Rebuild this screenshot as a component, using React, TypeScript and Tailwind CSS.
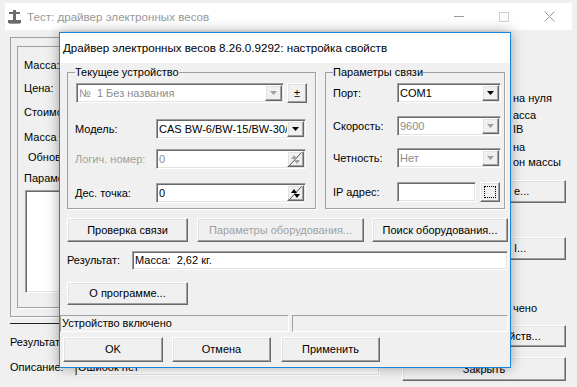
import React from "react";

const sunken =
  "border border-t-[#a0a0a0] border-l-[#a0a0a0] border-b-white border-r-white shadow-[inset_1px_1px_0_#696969,inset_-1px_-1px_0_#e3e3e3] bg-white p-px";
const raised =
  "border border-t-white border-l-white border-b-[#696969] border-r-[#696969] shadow-[inset_-1px_-1px_0_#a0a0a0,inset_1px_1px_0_#e3e3e3] bg-[#f0f0f0]";
const thinSunken =
  "border border-t-[#a0a0a0] border-l-[#a0a0a0] border-b-white border-r-white";

function Btn({
  children,
  className = "",
  disabled = false,
}: {
  children?: React.ReactNode;
  className?: string;
  disabled?: boolean;
}) {
  return (
    <div
      className={`${raised} flex shrink-0 items-center justify-center whitespace-nowrap ${
        disabled ? "text-[#a0a0a0]" : "text-black"
      } ${className}`}
    >
      {children}
    </div>
  );
}

function Arrow({ disabled = false }: { disabled?: boolean }) {
  return (
    <div className={`${raised} flex h-full w-[17px] shrink-0 items-center justify-center`}>
      <svg width="7" height="4" viewBox="0 0 7 4">
        <path d="M0 0h7L3.5 4z" fill={disabled ? "#a0a0a0" : "#000"} />
      </svg>
    </div>
  );
}

function Combo({
  value,
  disabled = false,
  className = "",
}: {
  value: string;
  disabled?: boolean;
  className?: string;
}) {
  return (
    <div className={`${sunken} flex shrink-0 ${className}`}>
      <div
        className={`flex flex-1 items-center overflow-hidden whitespace-pre pl-[1px] ${
          disabled ? "text-[#8c8c8c]" : "text-black"
        }`}
      >
        {value}
      </div>
      <Arrow disabled={disabled} />
    </div>
  );
}

function SpinIcon({ disabled = false }: { disabled?: boolean }) {
  const c = disabled ? "#a0a0a0" : "#000";
  return (
    <div className={`${raised} flex h-full w-[17px] shrink-0 items-center justify-center`}>
      <svg width="13" height="14" viewBox="0 0 13 14">
        <path d="M0.5 13.5L12.5 0.5" stroke="#505050" strokeWidth="1" />
        <path d="M2 7h6L5 3z" fill={c} />
        <path d="M5 8h6L8 12z" fill={c} />
      </svg>
    </div>
  );
}

function Spin({
  value,
  disabled = false,
  className = "",
}: {
  value: string;
  disabled?: boolean;
  className?: string;
}) {
  return (
    <div className={`${sunken} flex shrink-0 ${className}`}>
      <div
        className={`flex flex-1 items-center pl-[1px] ${
          disabled ? "text-[#8c8c8c]" : "text-black"
        }`}
      >
        {value}
      </div>
      <SpinIcon disabled={disabled} />
    </div>
  );
}

const groupBox = "border border-[#a0a0a0] shadow-[1px_1px_0_white]";

function Dialog() {
  return (
    <div className="absolute left-[59px] top-[32px] flex h-[336px] w-[452px] flex-col border border-[#1883d7] bg-[#f0f0f0] shadow-[0_0_12px_rgba(0,0,0,0.35)]">
      <div className="flex h-[30px] items-center bg-white pb-[2px] pl-[3px] text-[11.6px] text-black">
        Драйвер электронных весов 8.26.0.9292: настройка свойств
      </div>

      <div className="mt-[3px] flex pl-[7px]">
        <fieldset className={`h-[143px] w-[249px] ${groupBox}`}>
          <legend className="ml-[7px] leading-[13px]">Текущее устройство</legend>
          <div className="mt-[4px] flex gap-[3px] pl-[8px]">
            <Combo value={"№  1 Без названия"} disabled className="h-[20px] w-[208px]" />
            <Btn className="h-[20px] w-[20px]">±</Btn>
          </div>
          <div className="mt-[16px] flex items-center pl-[7px]">
            <div className="w-[81px]">Модель:</div>
            <Combo value="CAS BW-6/BW-15/BW-30/BW-60" className="h-[20px] w-[150px]" />
          </div>
          <div className="mt-[10px] flex items-center pl-[7px]">
            <div className="w-[81px] text-[#a0a0a0]">Логич. номер:</div>
            <Spin value="0" disabled className="h-[20px] w-[150px]" />
          </div>
          <div className="mt-[14px] flex items-center pl-[7px]">
            <div className="w-[81px]">Дес. точка:</div>
            <Spin value="0" className="h-[20px] w-[150px]" />
          </div>
        </fieldset>

        <fieldset className={`ml-[9px] h-[143px] w-[180px] ${groupBox}`}>
          <legend className="ml-[7px] leading-[13px]">Параметры связи</legend>
          <div className="mt-[4px] flex items-center pl-[7px]">
            <div className="w-[64px]">Порт:</div>
            <Combo value="COM1" className="h-[20px] w-[104px]" />
          </div>
          <div className="mt-[13px] flex items-center pl-[7px]">
            <div className="w-[64px]">Скорость:</div>
            <Combo value="9600" disabled className="h-[20px] w-[104px]" />
          </div>
          <div className="mt-[12px] flex items-center pl-[7px]">
            <div className="w-[64px]">Четность:</div>
            <Combo value="Нет" disabled className="h-[20px] w-[104px]" />
          </div>
          <div className="mt-[14px] flex items-center pl-[7px]">
            <div className="w-[64px]">IP адрес:</div>
            <div className={`${sunken} h-[20px] w-[79px]`} />
            <Btn className="ml-[4px] h-[20px] w-[20px]">
              <div className="h-[12px] w-[12px] border border-dotted border-black" />
            </Btn>
          </div>
        </fieldset>
      </div>

      <div className="mt-[9px] flex pl-[7px]">
        <Btn className="h-[24px] w-[121px]">Проверка связи</Btn>
        <Btn disabled className="ml-[9px] h-[24px] w-[167px]">
          Параметры оборудования...
        </Btn>
        <Btn className="ml-[8px] h-[24px] w-[136px]">Поиск оборудования...</Btn>
      </div>

      <div className="mt-[9px] flex items-center pl-[7px]">
        <div className="w-[65px]">Результат:</div>
        <div className={`${sunken} flex h-[19px] w-[376px] items-center whitespace-pre pl-[2px]`}>
          {"Масса:  2,62 кг."}
        </div>
      </div>

      <div className="mt-[12px] flex pl-[7px]">
        <Btn className="h-[23px] w-[121px]">О программе...</Btn>
      </div>

      <div className="mt-[10px] flex gap-[3px]">
        <div className={`${thinSunken} flex h-[17px] w-[229px] items-center pl-[1px]`}>
          Устройство включено
        </div>
        <div className={`${thinSunken} h-[17px] w-[216px]`} />
      </div>

      <div className="mt-[5px] flex pl-[3px]">
        <Btn className="h-[25px] w-[100px]">OK</Btn>
        <Btn className="ml-[9px] h-[25px] w-[99px]">Отмена</Btn>
        <Btn className="ml-[10px] h-[25px] w-[99px]">Применить</Btn>
      </div>
    </div>
  );
}

function ScaleIcon() {
  return (
    <svg width="13" height="14" viewBox="0 0 13 14">
      <rect x="5" y="0" width="3" height="2" fill="#6b6b6b" />
      <rect x="1" y="2" width="11" height="2" fill="#6b6b6b" />
      <rect x="5" y="4" width="3" height="6" fill="#6b6b6b" />
      <rect x="0" y="10" width="13" height="3" fill="#6b6b6b" />
      <rect x="1" y="13" width="11" height="1" fill="#9a9a9a" />
    </svg>
  );
}

export default function App() {
  return (
    <div className="relative h-[387px] w-[577px] overflow-hidden bg-[#f0f0f0] font-['Liberation_Sans',Arial,sans-serif] text-[11px] leading-[13px] text-black">
      {/* Background window */}
      <div className="flex h-full flex-col pt-[3px]">
        <div className="mx-[5px] flex h-[27px] items-center bg-white">
          <div className="ml-[3px] flex items-center">
            <ScaleIcon />
          </div>
          <div className="ml-[6px] text-[11.6px] text-[#999999]">Тест: драйвер электронных весов</div>
          <div className="ml-auto flex h-full">
            <div className="flex h-full w-[45px] items-center justify-center">
              <svg width="10" height="1" viewBox="0 0 10 1">
                <rect width="10" height="1" fill="#999999" />
              </svg>
            </div>
            <div className="flex h-full w-[46px] items-center justify-center">
              <svg width="10" height="10" viewBox="0 0 10 10">
                <rect x="0.5" y="0.5" width="9" height="9" fill="none" stroke="#d0d0d0" />
              </svg>
            </div>
            <div className="flex h-full w-[45px] items-center justify-center">
              <svg width="11" height="11" viewBox="0 0 11 11">
                <path d="M0.5 0.5L10.5 10.5M10.5 0.5L0.5 10.5" stroke="#999999" />
              </svg>
            </div>
          </div>
        </div>

        <div className="flex h-[320px]">
          <div className="flex w-[498px] shrink-0 flex-col pl-[10px]">
            <div className={`mt-[7px] h-[280px] ${groupBox}`}>
              <div className={`ml-[6px] mr-[6px] mt-[8px] flex h-[262px] flex-col pl-[6px] ${groupBox}`}>
                <div className="w-[35px] overflow-hidden whitespace-nowrap">
                  <div className="mt-[12px]">Масса:</div>
                  <div className="mt-[10px]">Цена:</div>
                  <div className="mt-[11px]">Стоимость:</div>
                  <div className="mt-[12px]">Масса тары:</div>
                  <div className="ml-[4px] mt-[7px]">Обновлять</div>
                  <div className="mt-[8px]">Параметры:</div>
                </div>
                <div className={`${sunken} ml-[1px] mt-[5px] h-[103px] w-[300px]`} />
              </div>
            </div>
            <div className="mt-[6px] h-px w-[470px] bg-[#222222]" />
            <div className="mt-[12px]">Результат:</div>
          </div>

          <div className="flex flex-1 flex-col">
            <div className="ml-[15px] mt-[62px]">на нуля</div>
            <div className="ml-[15px] mt-[4px]">асса</div>
            <div className="ml-[15px] mt-[1px]">IB</div>
            <div className="ml-[15px] mt-[5px]">на</div>
            <div className="ml-[15px] mt-[2px]">он массы</div>
            <Btn className="ml-[7px] mt-[11px] h-[23px] w-[61px] !justify-start pl-[8px]">е...</Btn>
            <Btn className="ml-[7px] mt-[34px] h-[23px] w-[61px] !justify-start pl-[8px]">I...</Btn>
            <div className="ml-[15px] mt-[42px]">чено</div>
            <Btn className="ml-[7px] mt-[10px] h-[22px] w-[61px] !justify-start pl-[3px]">йств...</Btn>
          </div>
        </div>

        <div className="flex items-start pl-[10px]">
          <div className="mt-[11px] w-[65px]">Описание:</div>
          <div className={`${sunken} mt-[8px] flex h-[18px] w-[305px] items-center pl-[2px]`}>
            Ошибок нет
          </div>
          <Btn className="ml-[22px] mt-[7px] h-[24px] w-[164px]">Закрыть</Btn>
        </div>
      </div>

      <Dialog />
    </div>
  );
}
